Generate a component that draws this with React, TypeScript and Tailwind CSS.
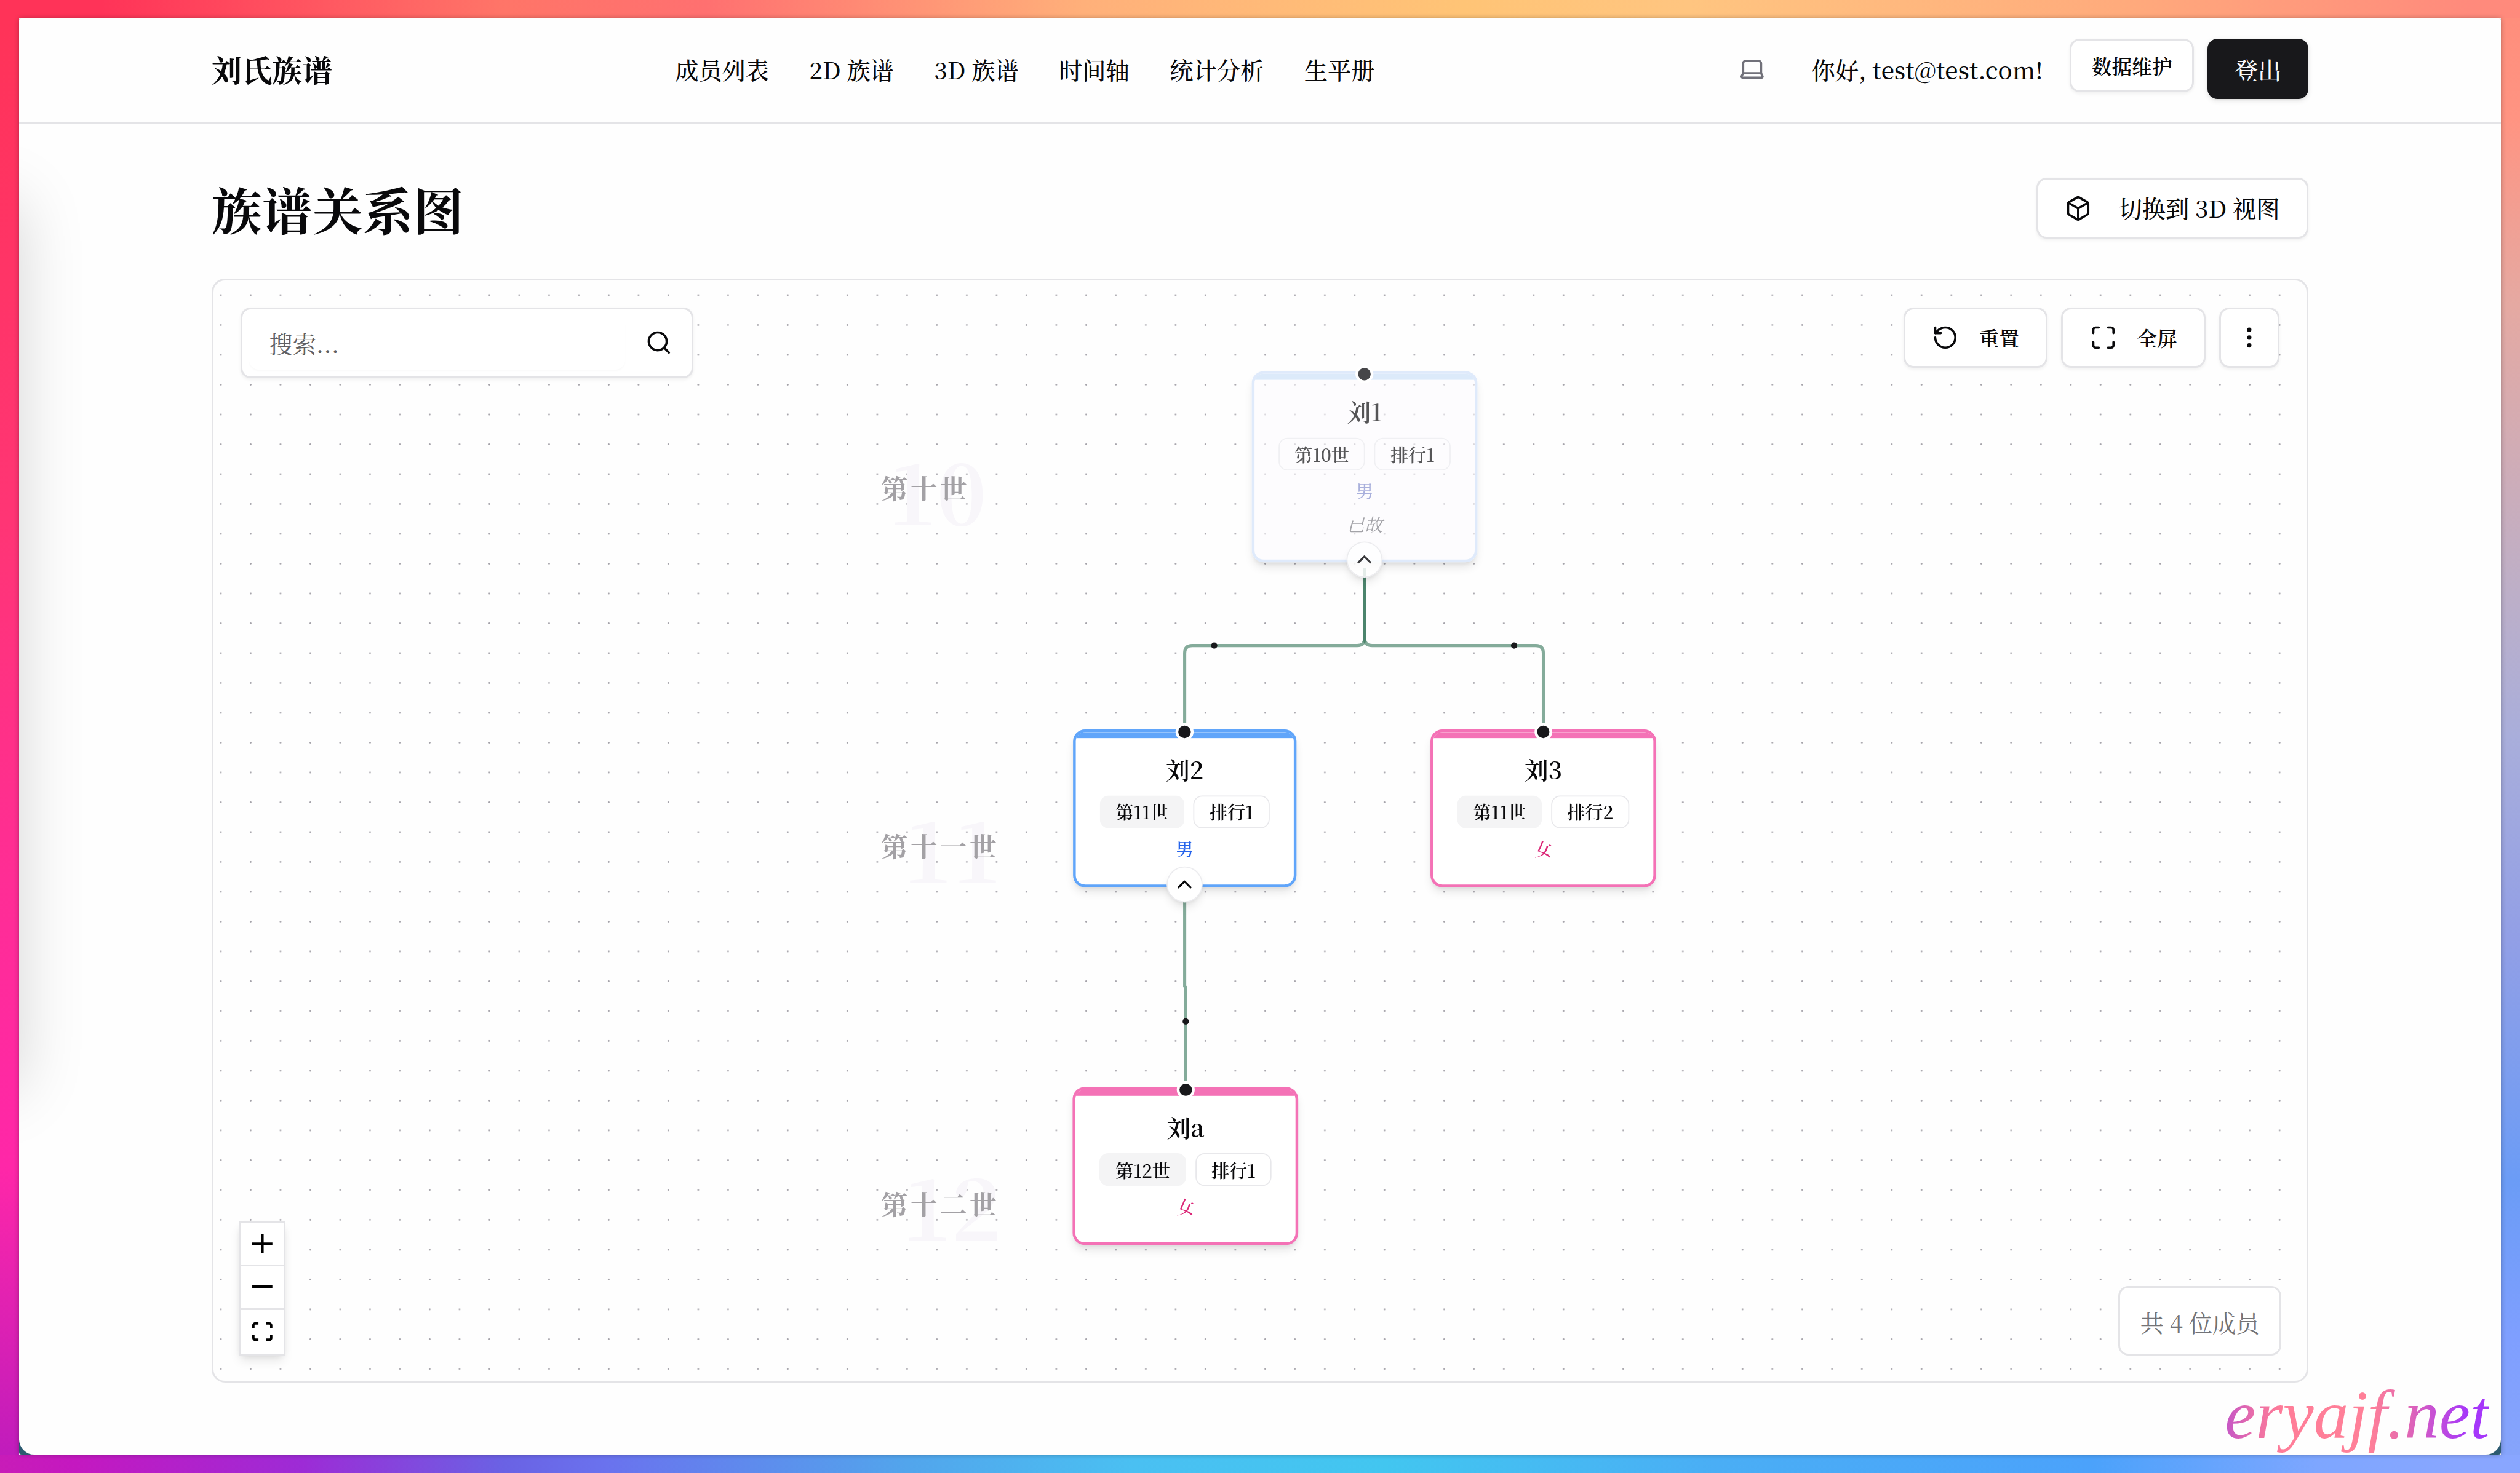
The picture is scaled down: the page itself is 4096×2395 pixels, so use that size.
import { Box, ChevronUp, EllipsisVertical, Laptop, Maximize, RotateCcw, Search } from "lucide-react";
import clsx from "clsx";

const NAV = ["成员列表", "2D 族谱", "3D 族谱", "时间轴", "统计分析", "生平册"];

interface Member {
  name: string;
  generation: number;
  rank: number;
  gender: "男" | "女";
  deceased?: boolean;
  expandable?: boolean;
  x: number;
  y: number;
}

// x is the horizontal center of the card, y its top edge
const MEMBERS: Member[] = [
  { name: "刘1", generation: 10, rank: 1, gender: "男", deceased: true, expandable: true, x: 771.2, y: 60.9 },
  { name: "刘2", generation: 11, rank: 1, gender: "男", expandable: true, x: 650.6, y: 300.9 },
  { name: "刘3", generation: 11, rank: 2, gender: "女", x: 891, y: 300.9 },
  { name: "刘a", generation: 12, rank: 1, gender: "女", x: 651.2, y: 540.9 },
];

const GENERATIONS = [
  { label: "第十世", num: 10, y: 138.8, center: 484.3 },
  { label: "第十一世", num: 11, y: 378.8, center: 494.8 },
  { label: "第十二世", num: 12, y: 618.8, center: 494.2 },
];

const outlineBtn =
  "flex items-center justify-center rounded-md border-[1.1px] border-[#e4e4e7] bg-white shadow-xs";

function Header() {
  return (
    <header className="relative z-10 h-[63px] shrink-0 border-b-[1.1px] border-[#e4e4e7] bg-[#fefefe]">
      <div className="mx-auto flex h-full w-[1248px] items-start pt-[12px]">
        <div className="flex h-[36px] w-[275.8px] items-center text-[18px] font-bold">刘氏族谱</div>
        <nav className="flex h-[37px] items-center gap-6 text-sm font-medium">
          {NAV.map((item) => (
            <span key={item} className="whitespace-nowrap">{item}</span>
          ))}
        </nav>
        <div className="ml-auto flex items-start">
          <div className="mr-[27.4px] flex h-[36px] items-center">
            <Laptop className="size-4 text-[#71717a]" />
          </div>
          <span className="mr-[16px] flex h-[37px] items-center whitespace-nowrap text-sm font-medium">
            你好, test@test.com!
          </span>
          <button className={clsx(outlineBtn, "mr-2 h-8 w-[74px] text-xs font-semibold")}>数据维护</button>
          <button className="h-9 w-[60px] rounded-md bg-[#18181b] pt-px text-sm font-medium text-[#fafafa] shadow-sm">
            登出
          </button>
        </div>
      </div>
    </header>
  );
}

function MemberNode({ member }: { member: Member }) {
  const male = member.gender === "男";
  const faded = member.deceased;
  return (
    <div
      className={clsx(
        "absolute flex w-max -translate-x-1/2 flex-col items-center rounded-lg border-2 px-[16.2px] pt-[13px] shadow-md",
        faded ? "h-[128px] border-[#dfeafb] bg-[#fbfafd]/60 text-[#555557]" : "h-[106px] bg-white",
        !faded && (male ? "border-[#60a5fa]" : "border-[#f472b6]"),
      )}
      style={{ left: member.x, top: member.y }}
    >
      <div className="absolute inset-0 overflow-hidden rounded-[6px]">
        <div className={clsx("h-1", faded ? "bg-[#dceafa]" : male ? "bg-[#60a5fa]" : "bg-[#f472b6]")} />
      </div>
      <div
        className={clsx(
          "absolute -top-[6px] left-1/2 size-3 -translate-x-1/2 rounded-full border-2 border-white",
          faded ? "bg-[#464649]" : "bg-[#18181b]",
        )}
      />
      <div className="relative text-base leading-6 font-semibold">{member.name}</div>
      <div className="relative mt-[5.6px] flex gap-[6.2px] text-xs font-semibold">
        <span
          className={clsx(
            "flex h-[22px] items-center justify-center rounded-md border px-2.5",
            faded ? "border-[#f0f0f3]" : "border-transparent bg-[#f4f4f5]",
          )}
        >
          第{member.generation}世
        </span>
        <span
          className={clsx(
            "flex h-[22px] items-center justify-center rounded-md border px-2.5",
            faded ? "border-[#f0f0f3]" : "border-[#e8e8eb]",
          )}
        >
          排行{member.rank}
        </span>
      </div>
      <div
        className={clsx(
          "relative mt-[5.5px] text-xs leading-4 font-medium",
          faded ? "text-[#a9b0dc]" : male ? "text-[#2563eb]" : "text-[#db2777]",
        )}
      >
        {member.gender}
      </div>
      {faded && <div className="relative mt-[6px] text-xs leading-4 text-[#a3a3a8] italic">已故</div>}
      {member.expandable && (
        <div
          className={clsx(
            "absolute -bottom-[12px] left-1/2 flex size-6 -translate-x-1/2 items-center justify-center rounded-full border border-[#ececef] shadow-md",
            faded ? "bg-white/85" : "bg-white text-[#09090b]",
          )}
        >
          <ChevronUp className={clsx("size-4", faded && "text-[#3a3a3d]")} />
        </div>
      )}
    </div>
  );
}

function Edges() {
  return (
    <svg className="absolute top-0 left-0 h-[740px] w-[1400px]" fill="none">
      <g stroke="#1b6345" strokeOpacity="0.54" strokeWidth="2.1">
        <path d="M771.2 193V239.8Q771.2 244.8 766.2 244.8H655.6Q650.6 244.8 650.6 249.8V300" />
        <path d="M771.2 193V239.8Q771.2 244.8 776.2 244.8H886Q891 244.8 891 249.8V300" />
        <path d="M650.6 410V473.3L651.2 473.8V540" />
      </g>
      <g fill="#18181b">
        <circle cx="670.4" cy="244.8" r="2.1" />
        <circle cx="871.4" cy="244.8" r="2.1" />
        <circle cx="651.3" cy="496.9" r="2.1" />
      </g>
    </svg>
  );
}

function Controls() {
  return (
    <div className="absolute bottom-[15px] left-[15px] w-7 border-[1.1px] border-[#e4e4e7] bg-white shadow-md">
      <div className="flex h-[26px] items-center justify-center border-b-[1.1px] border-[#e4e4e7]">
        <svg viewBox="0 0 32 32" className="size-3">
          <path d="M32 18.133H18.133V32h-4.266V18.133H0v-4.266h13.867V0h4.266v13.867H32z" />
        </svg>
      </div>
      <div className="flex h-[26px] items-center justify-center border-b-[1.1px] border-[#e4e4e7]">
        <svg viewBox="0 0 32 5" className="w-3">
          <path d="M0 0h32v4.2H0z" />
        </svg>
      </div>
      <div className="flex h-[26px] items-center justify-center">
        <svg viewBox="0 0 32 30" className="w-3">
          <path d="M3.692 4.63c0-.53.4-.938.939-.938h5.215V0H4.708C2.13 0 0 2.054 0 4.63v5.216h3.692V4.631zM27.354 0h-5.2v3.692h5.17c.53 0 .984.4.984.939v5.215H32V4.631A4.624 4.624 0 0027.354 0zm.954 24.83c0 .532-.4.94-.939.94h-5.215v3.768h5.215c2.577 0 4.631-2.13 4.631-4.707v-5.139h-3.692v5.139zm-23.677.94c-.531 0-.939-.4-.939-.94v-5.138H0v5.139c0 2.577 2.13 4.707 4.708 4.707h5.138V25.77H4.631z" />
        </svg>
      </div>
    </div>
  );
}

function FlowCanvas() {
  return (
    <div className="relative mt-6 h-[657.2px] overflow-hidden rounded-lg border-[1.1px] border-[#e4e4e7]">
      <svg className="absolute inset-0 size-full">
        <pattern id="dots" x="-4.5" y="-0.08" width="17.76" height="17.76" patternUnits="userSpaceOnUse">
          <circle cx="8.88" cy="8.88" r="0.5" fill="#a3a1a8" />
        </pattern>
        <rect width="100%" height="100%" fill="url(#dots)" />
      </svg>

      {/* viewport, zoomed out to fit the whole tree */}
      <div className="absolute inset-0 left-[0.4px] origin-top-left scale-[0.888]">
        {GENERATIONS.map((g) => (
          <div key={g.num}>
            <div
              className="absolute -translate-x-1/2 -translate-y-1/2 text-[57px] leading-none font-bold tracking-[-0.5px] text-[#f8f6fa]"
              style={{ left: g.center, top: g.y + 1 }}
            >
              {g.num}
            </div>
            <div
              className="absolute left-[447px] -translate-y-1/2 text-lg font-bold tracking-widest whitespace-nowrap text-[#a3a1a5]"
              style={{ top: g.y }}
            >
              {g.label}
            </div>
          </div>
        ))}
        <Edges />
        {MEMBERS.map((m) => (
          <MemberNode key={m.name} member={m} />
        ))}
      </div>

      <div className="absolute top-4 left-4 flex h-[42px] w-[269.8px] items-center rounded-md border-[1.1px] border-[#e4e4e7] bg-white p-1 shadow-xs">
        <div className="flex h-8 w-[224px] items-center rounded-md px-3 pt-px text-sm text-[#5f5f64] shadow-[0_1px_1px_rgba(0,0,0,0.02)]">
          搜索...
        </div>
        <div className="flex h-8 flex-1 items-center justify-center pl-1">
          <Search className="size-4" />
        </div>
      </div>

      <div className="absolute top-4 right-4 flex gap-2 text-xs font-semibold">
        <button className={clsx(outlineBtn, "h-9 w-[86px] gap-3")}>
          <RotateCcw className="size-4" />
          重置
        </button>
        <button className={clsx(outlineBtn, "h-9 w-[86px] gap-3")}>
          <Maximize className="size-4" />
          全屏
        </button>
        <button className={clsx(outlineBtn, "h-9 w-9")}>
          <EllipsisVertical className="size-4" />
        </button>
      </div>

      <Controls />

      <div className="absolute right-[15px] bottom-[15px] flex h-[41.5px] w-[97px] items-center justify-center rounded-md border-[1.1px] border-[#e4e4e7] bg-white pt-[2px] text-sm whitespace-nowrap text-[#737376]">
        共 4 位成员
      </div>
    </div>
  );
}

export default function App() {
  return (
    <div className="grid h-[877.1px] w-[1500px] grid-rows-[11px_1fr_11px] overflow-hidden font-['Noto_Serif_CJK_SC','Liberation_Serif','Noto_Sans_CJK_SC',serif] text-[#09090b] [zoom:2.73067]">
      <div className="bg-[linear-gradient(90deg,#ff3358_0%,#ff3358_4%,#ff7568_20%,#ff7070_28%,#ffb07a_43%,#ffc476_58%,#ffc580_67%,#ffab7c_84%,#ff8a7c_98%)]" />
      <div className="flex min-h-0">
        <div className="w-[11.2px] bg-[linear-gradient(180deg,#ff3358_0%,#ff3575_35%,#ff2d95_60%,#ff27a8_80%,#c01cbc_100%)]" />
        <div className="relative z-10 flex-1 rounded-[1.5px] bg-[#2b5a70] shadow-[0_0_3px_rgba(0,0,0,0.3)]">
          <div className="relative flex h-full flex-col overflow-hidden rounded-t-[1.5px] rounded-b-[9px] bg-[#fefefe]">
            <Header />
            {/* shadow of the collapsed drawer sitting off the left edge */}
            <div className="absolute top-[109px] -left-[300px] h-[528px] w-[300px] shadow-[0_0_36px_rgba(0,0,0,0.17)]" />
            <main className="mx-auto w-[1248px] pt-8">
              <div className="flex h-9 items-center justify-between">
                <h1 className="text-3xl leading-none font-bold">族谱关系图</h1>
                <button className={clsx(outlineBtn, "h-9 w-[162px] gap-4 text-sm font-medium")}>
                  <Box className="size-4" />
                  切换到 3D 视图
                </button>
              </div>
              <FlowCanvas />
            </main>
            <div className="absolute right-[7px] bottom-0 bg-[linear-gradient(90deg,#c456c8_0%,#ec6fa6_12%,#ff7d98_22%,#ff8098_55%,#e56ab0_68%,#c44fd8_80%,#a637fa_92%)] bg-clip-text font-['Liberation_Serif',serif] text-[41.4px] leading-[48px] text-transparent italic">
              eryajf.net
            </div>
          </div>
        </div>
        <div className="w-[11.2px] bg-[linear-gradient(180deg,#ff8e7c_0%,#ff9482_7%,#e5a9a2_20%,#bdafc8_40%,#a9aedb_50%,#929fe6_64%,#6b9cf6_81%,#7f9fff_92%,#86a4fb_100%)]" />
      </div>
      <div className="bg-[linear-gradient(90deg,#c81cb8_0%,#c418c0_3%,#9d2bd6_12%,#6a62e4_20%,#6a72ee_24%,#52a5ec_36%,#4ac0f2_45%,#42c6f0_55%,#4aaef5_68%,#4ba2fb_83%,#7ea6ff_92%,#89a6ff_98%)]" />
    </div>
  );
}
